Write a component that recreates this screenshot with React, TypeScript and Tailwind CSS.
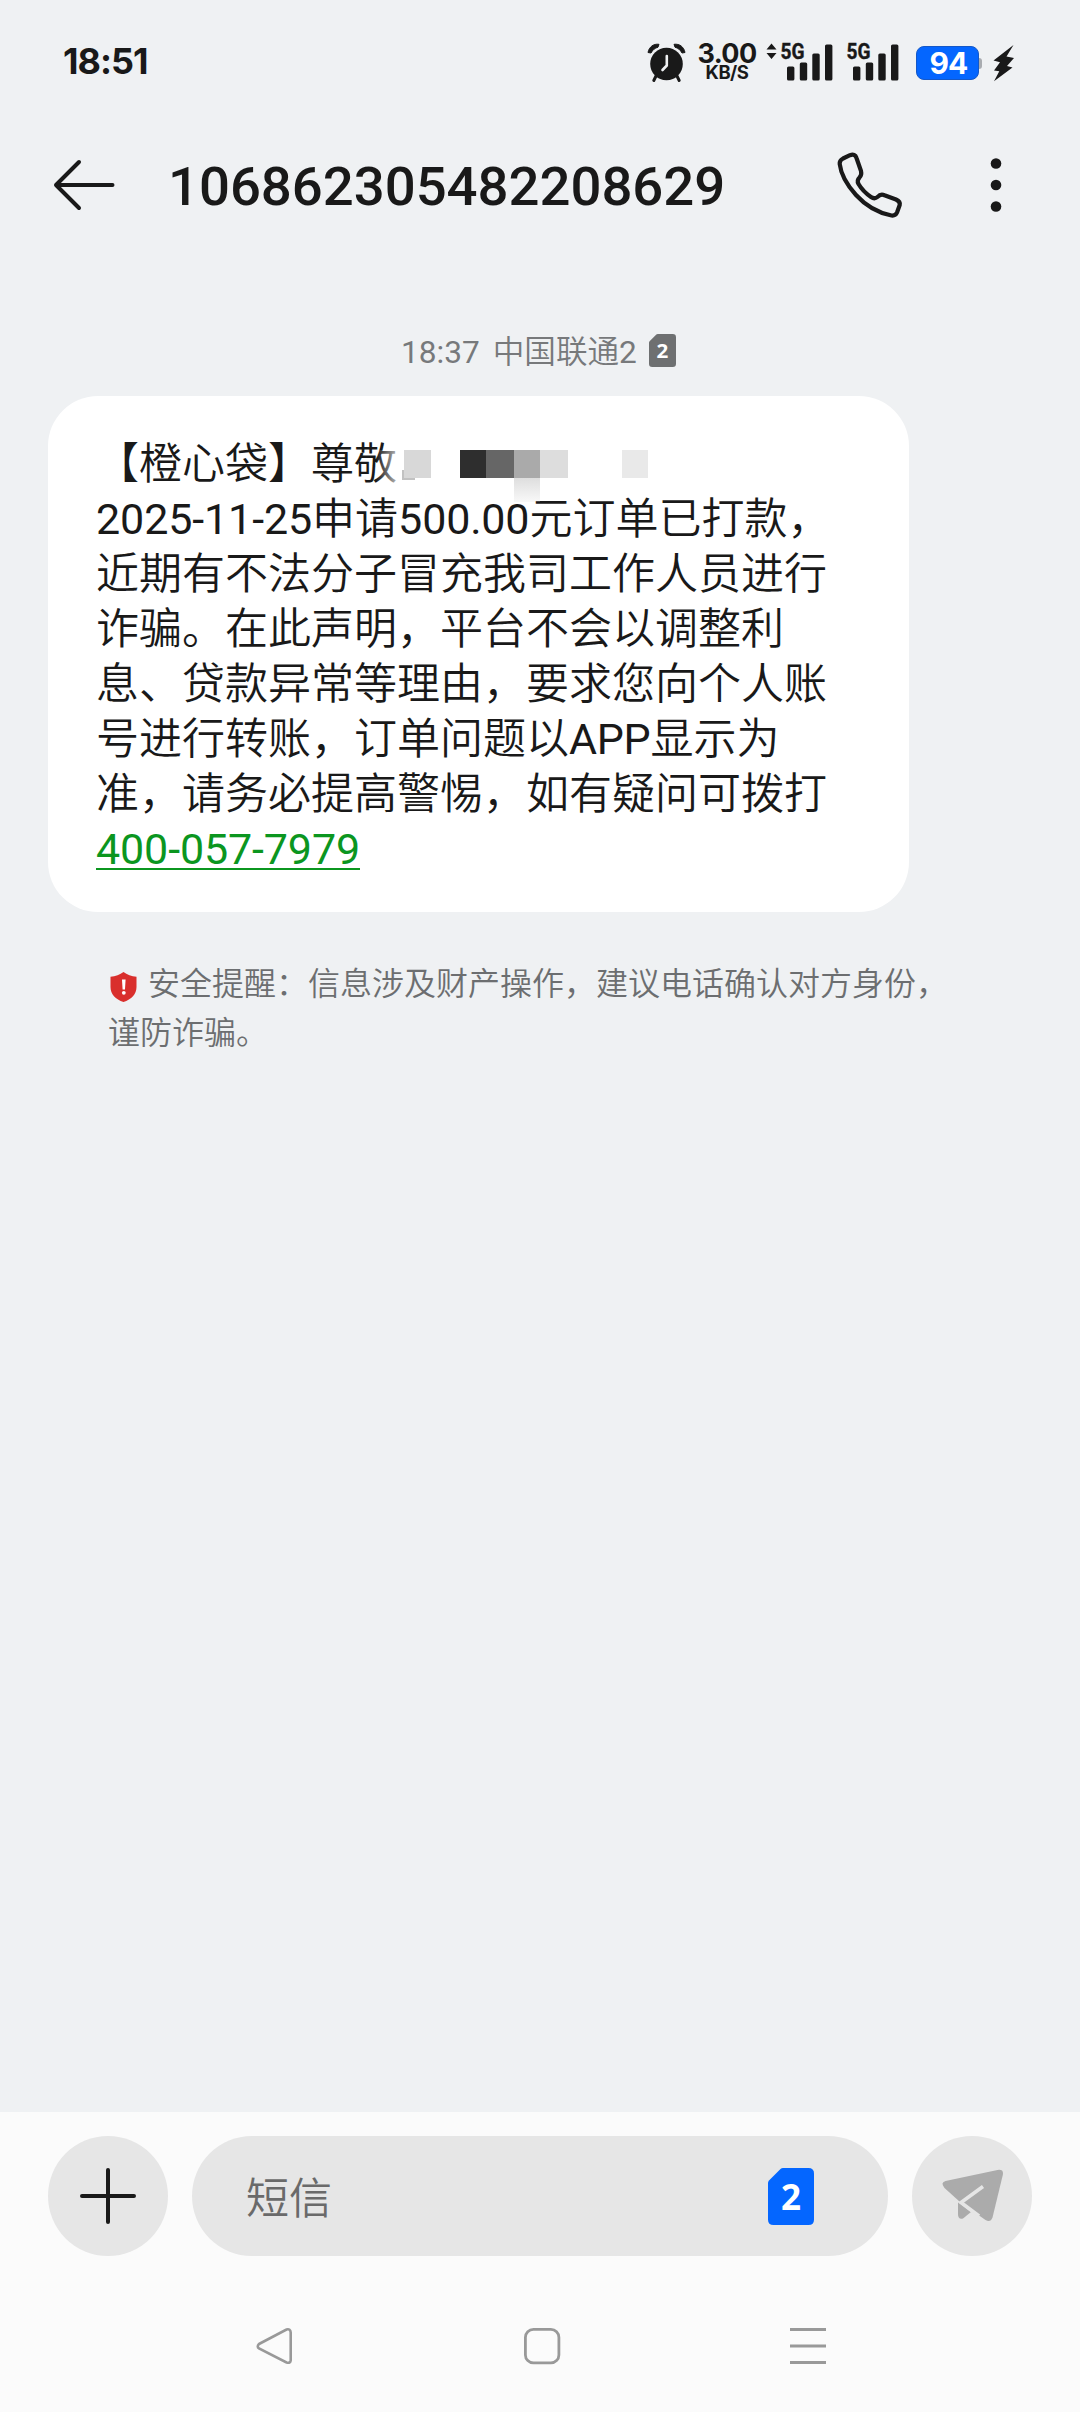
import React from 'react';

const CJK = "font-['Roboto','Noto_Sans_CJK_SC_DemiLight','Noto_Sans_CJK_SC_Light','Noto_Sans_CJK_SC',sans-serif]";

function Signal({ arrows }: { arrows?: boolean }) {
  return (
    <svg width="68" height="48" viewBox="0 -8 68 48" fill="#191919">
      {arrows && <path d="M5.5 1.5 10.5 7.5H.5ZM5.5 17 10.5 11H.5Z" />}
      <text x="14.500" y="17.300" fontSize="22" fontWeight="700" stroke="#191919" strokeWidth="0.400" textLength="24" lengthAdjust="spacingAndGlyphs" fontFamily="Roboto, sans-serif">5G</text>
      <rect x="21" y="24.5" width="7.4" height="14" rx="1.6" />
      <rect x="33.8" y="20.5" width="7.4" height="18" rx="1.6" />
      <rect x="46.3" y="11.5" width="7.4" height="27" rx="1.6" />
      <rect x="59" y="2.5" width="7.4" height="36" rx="1.6" />
    </svg>
  );
}

function StatusBar() {
  return (
    <div className="flex h-[124px] items-start justify-between pt-[41px] pl-[63px] pr-[64px] text-[#191919]">
      <div className="font-['Inter',sans-serif] text-[36px] font-bold leading-[41px] tracking-[-1px]">18:51</div>
      <div className="flex h-[41px] items-start">
        <svg className="mt-px" width="39" height="41" viewBox="0 0 39 41" fill="#191919">
          <circle cx="19.5" cy="22" r="16.3" />
          <path d="M1 10.5C2 5 6.500 1.500 12 2.300L11 5.200C8 6 5.500 8 4 11ZM38 10.500C37 5 32.500 1.500 27 2.300L28 5.200C31 6 33.500 8 35 11Z" stroke="#191919" strokeWidth="1" strokeLinejoin="round" />
          <path d="M9 34 6.800 38.500M30 34 32.200 38.500" stroke="#191919" strokeWidth="3" strokeLinecap="round" />
          <path d="M19.800 14V23.500L15.500 28" stroke="#eff1f3" strokeWidth="2.600" strokeLinecap="round" strokeLinejoin="round" fill="none" />
        </svg>
        <div className="ml-[11px] mt-[2px] flex w-[60px] flex-col items-center font-['Inter',sans-serif]">
          <span className="text-[27px] font-bold leading-[21px] tracking-[-0.600px]">3.00</span>
          <span className="text-[18.500px] font-bold leading-[17px] tracking-[-0.500px]">KB/S</span>
        </div>
        <div className="ml-[9px] mt-[-7px]"><Signal arrows /></div>
        <div className="ml-[-2px] mt-[-7px]"><Signal /></div>
        <div className="ml-[16px] mt-[5px] flex items-center">
          <div className="flex h-[34px] w-[63px] items-center justify-center rounded-[8px] border border-[#1458c8] bg-[#0466ff] pl-[2px] pt-px font-['Inter',sans-serif] text-[30px] font-bold tracking-[-1px] text-white">94</div>
          <div className="h-[11px] w-[3px] rounded-r-[3px] bg-[#a9acb0]" />
        </div>
        <svg className="ml-[10px] mt-[3px]" width="24" height="38" viewBox="0 0 24 38" fill="#191919">
          <path d="M21.500 1 1.500 16.500 8 18.300 2 26.500 7.300 27.300 2 37.300 20.500 23.500 15 22 22 14 14.500 12.500Z" />
        </svg>
      </div>
    </div>
  );
}

function Header() {
  return (
    <header className="flex h-[122px] items-center pl-[52px] pr-[77px]">
      <svg width="64" height="56" viewBox="0 0 64 56" fill="none" stroke="#191919" strokeWidth="4" strokeLinecap="round" strokeLinejoin="round">
        <path d="M60.500 28H4M27 5 4 28 27 51" />
      </svg>
      <h1 className="mt-[2px] ml-[52px] font-['Roboto',sans-serif] text-[54.500px] font-medium leading-[64px] tracking-[-0.020px] text-[#191919]">106862305482208629</h1>
      <svg className="ml-auto" width="68" height="68" viewBox="0 0 68 68" fill="none" stroke="#191919" strokeWidth="4.200" strokeLinejoin="round">
        <path d="M7 7.500 14 4.200Q19 2.300 20.500 7L25 20Q26 24 23.500 26.500Q20.500 29.500 22.500 33Q27 40.500 35 46Q38.500 48.500 41.500 46Q44.500 42.500 48.500 44.200L60 48.500Q64.500 50.500 63.700 54L61 61.500Q59.500 65 55.500 64.500Q35 60.500 20 44Q5.500 28 3.700 13Q3.300 9.500 7 7.500Z" />
      </svg>
      <svg className="ml-[85px]" width="14" height="56" viewBox="0 0 14 56" fill="#191919">
        <circle cx="7" cy="6.500" r="5.300" />
        <circle cx="7" cy="28" r="5.300" />
        <circle cx="7" cy="49.500" r="5.300" />
      </svg>
    </header>
  );
}

function Sim({ width, height, color }: { width: number; height: number; color: string }) {
  return (
    <svg width={width} height={height} viewBox="0 0 46 57" preserveAspectRatio="none">
      <path d="M15 0H40.500Q46 0 46 5.500V51.500Q46 57 40.500 57H5.500Q0 57 0 51.500V15Q0 13.500 1 12.500L12.500 1Q13.500 0 15 0Z" fill={color} />
      <text x="23" y="42" textAnchor="middle" fontSize="35" fontWeight="700" fill="#fff" fontFamily="'Noto Sans', sans-serif">2</text>
    </svg>
  );
}

function Message() {
  return (
    <section className={`relative mt-[27px] ml-12 h-[516px] w-[861px] rounded-[50px] bg-white pt-[41px] pl-12 text-[43px] leading-[55px] text-[#191919] [text-spacing-trim:space-all] whitespace-nowrap ${CJK}`}>
      <p>【橙心袋】尊敬</p>
      <p><span className="tracking-[-0.100px]">2025-11-25</span>申请<span className="tracking-[-0.150px]">500.00</span>元订单已打款，</p>
      <p>近期有不法分子冒充我司工作人员进行</p>
      <p>诈骗。在此声明，平台不会以调整利</p>
      <p>息、贷款异常等理由，要求您向个人账</p>
      <p>号进行转账，订单问题以<span className="tracking-[-0.300px]">APP</span>显示为</p>
      <p>准，请务必提高警惕，如有疑问可拨打</p>
      <p><a className="tracking-[-0.120px] text-[#0b961f] underline decoration-[2px] underline-offset-[4px]">400-057-7979</a></p>
      {/* Pixelated strip that hides the recipient's name */}
      <div className="absolute left-[328px] top-[54px] flex h-[52px] w-[300px] items-start">
        <div className="h-[36px] w-[28px] bg-gradient-to-r from-white/0 to-white/90" />
        <div className="h-[28px] w-[27px] bg-[#d8d8d8]" />
        <div className="h-[28px] w-[29px] bg-white" />
        <div className="h-[28px] w-[26px] bg-[#2e2e2e]" />
        <div className="h-[28px] w-[28px] bg-[#666]" />
        <div className="w-[26px]">
          <div className="h-[28px] bg-[#aaa]" />
          <div className="h-[24px] bg-gradient-to-b from-[#dedede] to-[#dedede]/20" />
        </div>
        <div className="h-[28px] w-[28px] bg-[#ddd]" />
        <div className="ml-[54px] h-[28px] w-[26px] bg-[#e9e9e9]" />
      </div>
      <div className="absolute left-[354px] top-[74px] h-[10px] w-[13px] border-b-2 border-l-2 border-[#999]/60" />
    </section>
  );
}

function Warning() {
  return (
    <div className={`mt-[48px] pl-[108px] text-[32px] leading-[49px] text-[#6c6e70] whitespace-nowrap [text-spacing-trim:space-all] ${CJK}`}>
      <div className="flex items-center">
        <svg className="mr-[10px] mt-[5px]" width="30" height="32" viewBox="0 0 30 32">
          <path d="M15.500 1C19 3.800 23.500 5.300 28.500 5.800V16C28.500 23 23.500 28.500 15.500 31C7.500 28.500 2.500 23 2.500 16V5.800C7.500 5.300 12 3.800 15.500 1Z" fill="#d92f2c" />
          <path d="M14 8.500H17.600L17 18.500H14.600Z" fill="#fff" />
          <circle cx="15.800" cy="21.800" r="1.900" fill="#fff" />
        </svg>
        安全提醒：信息涉及财产操作，建议电话确认对方身份，
      </div>
      <div>谨防诈骗。</div>
    </div>
  );
}

function Composer() {
  return (
    <div className="flex items-center gap-6 px-12 pt-6">
      <button className="flex size-[120px] items-center justify-center rounded-full bg-[#e6e6e6]">
        <svg width="60" height="60" viewBox="0 0 60 60" stroke="#191919" strokeWidth="4" strokeLinecap="round">
          <path d="M4 30H56M30 4V56" />
        </svg>
      </button>
      <div className="flex h-[120px] flex-1 items-center justify-between rounded-full bg-[#e6e6e6] pl-[54px] pr-[74px]">
        <span className={`pt-[5px] text-[43px] leading-[60px] text-[#6a6a6a] ${CJK}`}>短信</span>
        <Sim width={46} height={57} color="#0466ff" />
      </div>
      <button className="flex size-[120px] items-center justify-center rounded-full bg-[#e6e6e6] pl-[2px]">
        <svg width="64" height="56" viewBox="0 0 64 56">
          <path d="M4.500 13 56.500 2Q63 1 61.800 7L51.500 49.500Q49.500 55 44.500 52L19 34 3.500 20Q-1 14.500 4.500 13Z" fill="#ababab" />
          <path d="M17 34V46Q17 52 22 50.500L30 44Z" fill="#ababab" />
          <path d="M42 18.500 20 34.500 38 48" fill="none" stroke="#e6e6e6" strokeWidth="3.600" />
        </svg>
      </button>
    </div>
  );
}

function NavBar() {
  return (
    <nav className="mt-[70px] flex items-center pl-[255px] text-[#999]">
      <svg width="40" height="40" viewBox="0 0 40 40" fill="none" stroke="currentColor" strokeWidth="2.600">
        <path d="M4 18 31.500 3.500Q35.500 2.500 35.700 6.500V34.500Q35.500 37.500 31.500 36.500L4 22.500Q1.500 20.500 4 18Z" />
      </svg>
      <svg className="ml-[227px]" width="40" height="40" viewBox="0 0 40 40" fill="none" stroke="currentColor" strokeWidth="2.800">
        <rect x="3.400" y="3.400" width="33.500" height="33.500" rx="8" />
      </svg>
      <svg className="ml-[226px]" width="40" height="40" viewBox="0 0 40 40" stroke="currentColor" strokeWidth="3">
        <path d="M2 3.500H38M2 20H38M2 36.500H38" />
      </svg>
    </nav>
  );
}

export default function App() {
  return (
    <div className="flex h-[2412px] w-[1080px] flex-col overflow-hidden bg-[#eff1f3]">
      <StatusBar />
      <Header />
      <div className={`mt-[84px] flex h-[40px] items-center pl-[401px] text-[31.600px] text-[#77797b] whitespace-nowrap ${CJK}`}>
        <span className="pt-[6px]">18:37</span>
        <span className="ml-[13px] mr-[12px] pt-[6px]">中国联通2</span>
        <Sim width={27} height={33} color="#6e7071" />
      </div>
      <div className="-mt-px">
        <Message />
      </div>
      <Warning />
      <footer className="mt-auto h-[300px] bg-[#fbfbfb]">
        <Composer />
        <NavBar />
      </footer>
    </div>
  );
}
